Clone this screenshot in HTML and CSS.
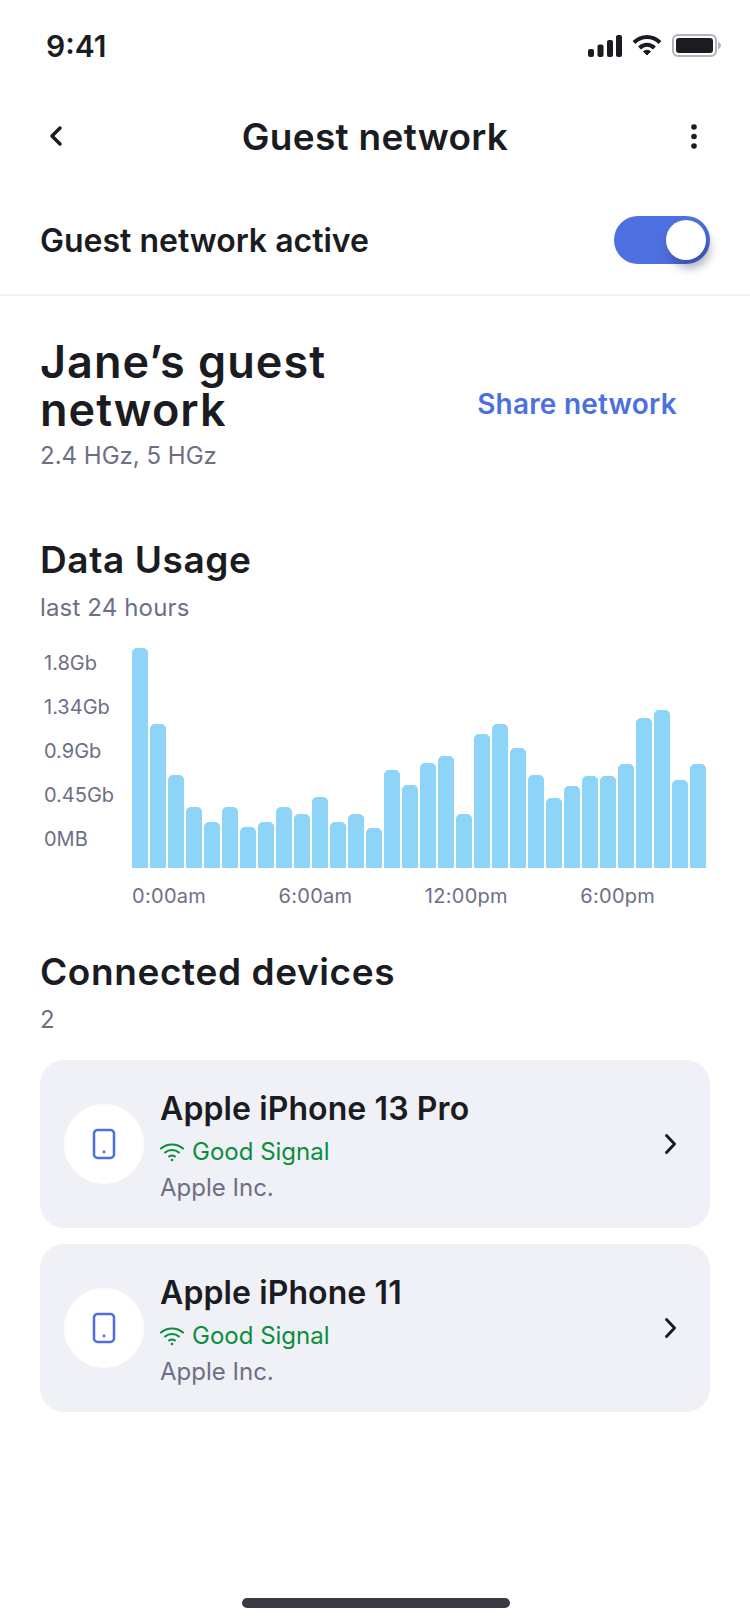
FILE: index.html
```html
<!DOCTYPE html>
<html lang="en">

<head>
    <meta charset="utf-8">
    <title>Guest network</title>
    <meta name="viewport" content="width=device-width, initial-scale=1">
    <link rel="stylesheet" href="styles.css">
</head>

<body>
    <div class="status-bar">
        <span class="status-time">9:41</span>
        <div class="status-icons">
            <svg width="34" height="22" viewBox="0 0 34 22" fill="#1b1c22">
                <rect x="0" y="14" width="6" height="8" rx="2"/>
                <rect x="9.5" y="9.5" width="6" height="12.5" rx="2"/>
                <rect x="19" y="5" width="6" height="17" rx="2"/>
                <rect x="28" y="0" width="6" height="22" rx="2"/>
            </svg>
            <svg width="30" height="23" viewBox="0 0 30 23" fill="none" stroke="#1b1c22" stroke-width="4">
                <path d="M2 8.5C9.5 1.2 20.5 1.2 28 8.500"/>
                <path d="M7.500 14C12 9.800 18 9.800 22.500 14"/>
                <path d="M11.500 17.500L15 21 18.500 17.500C16.500 15.800 13.500 15.800 11.500 17.500Z" fill="#1b1c22" stroke-width="1"/>
            </svg>
            <svg width="49" height="23" viewBox="0 0 49 23" fill="none">
                <rect x="1" y="1" width="43" height="21" rx="5" stroke="#b4b4b8" stroke-width="2"/>
                <rect x="4" y="4" width="37" height="15" rx="3" fill="#1b1c22"/>
                <path d="M46 8C48 8.500 49 10 49 11.500C49 13 48 14.500 46 15Z" fill="#b4b4b8"/>
            </svg>
        </div>
    </div>

    <header class="nav-bar">
        <div class="nav-side">
            <svg width="16" height="24" viewBox="0 0 16 24" fill="none" stroke="#1b1c22" stroke-width="3.500" stroke-linecap="round" stroke-linejoin="round">
                <path d="M12 4L4 12L12 20"/>
            </svg>
        </div>
        <h1 class="nav-title">Guest network</h1>
        <div class="nav-side nav-side-right">
            <svg width="6" height="25" viewBox="0 0 6 25" fill="#1b1c22">
                <circle cx="3" cy="3" r="2.800"/>
                <circle cx="3" cy="12.500" r="2.800"/>
                <circle cx="3" cy="22" r="2.800"/>
            </svg>
        </div>
    </header>

    <div class="active-row">
        <span class="active-label">Guest network active</span>
        <div class="toggle">
            <div class="toggle-knob"></div>
        </div>
    </div>

    <section class="network">
        <div class="network-info">
            <h2 class="network-name">Jane’s guest network</h2>
            <p class="muted">2.4 HGz, 5 HGz</p>
        </div>
        <a class="share-link">Share network</a>
    </section>

    <section class="usage">
        <h2 class="section-title">Data Usage</h2>
        <p class="muted">last 24 hours</p>

        <div class="chart">
            <div class="y-axis">
                <span>1.8Gb</span>
                <span>1.34Gb</span>
                <span>0.9Gb</span>
                <span>0.45Gb</span>
                <span>0MB</span>
            </div>
            <div class="bars">
                <div class="bar" style="height: 220px"></div>
                <div class="bar" style="height: 144px"></div>
                <div class="bar" style="height: 93px"></div>
                <div class="bar" style="height: 61px"></div>
                <div class="bar" style="height: 46px"></div>
                <div class="bar" style="height: 61px"></div>
                <div class="bar" style="height: 41px"></div>
                <div class="bar" style="height: 46px"></div>
                <div class="bar" style="height: 61px"></div>
                <div class="bar" style="height: 54px"></div>
                <div class="bar" style="height: 71px"></div>
                <div class="bar" style="height: 46px"></div>
                <div class="bar" style="height: 54px"></div>
                <div class="bar" style="height: 40px"></div>
                <div class="bar" style="height: 98px"></div>
                <div class="bar" style="height: 83px"></div>
                <div class="bar" style="height: 105px"></div>
                <div class="bar" style="height: 112px"></div>
                <div class="bar" style="height: 54px"></div>
                <div class="bar" style="height: 134px"></div>
                <div class="bar" style="height: 144px"></div>
                <div class="bar" style="height: 120px"></div>
                <div class="bar" style="height: 93px"></div>
                <div class="bar" style="height: 70px"></div>
                <div class="bar" style="height: 82px"></div>
                <div class="bar" style="height: 92px"></div>
                <div class="bar" style="height: 92px"></div>
                <div class="bar" style="height: 104px"></div>
                <div class="bar" style="height: 150px"></div>
                <div class="bar" style="height: 158px"></div>
                <div class="bar" style="height: 88px"></div>
                <div class="bar" style="height: 104px"></div>
            </div>
        </div>
        <div class="x-axis">
            <span>0:00am</span>
            <span>6:00am</span>
            <span>12:00pm</span>
            <span>6:00pm</span>
        </div>
    </section>

    <section class="devices">
        <h2 class="section-title">Connected devices</h2>
        <p class="muted">2</p>

        <div class="device-list">
            <div class="device-card">
                <div class="device-icon">
                    <svg width="24" height="32" viewBox="0 0 24 32" fill="none" stroke="#4e6fdf" stroke-width="2.500">
                        <rect x="2" y="2" width="20" height="28" rx="3.500"/>
                        <circle cx="12" cy="24" r="1.400" fill="#4e6fdf" stroke="none"/>
                    </svg>
                </div>
                <div class="device-info">
                    <div class="device-name">Apple iPhone 13 Pro</div>
                    <div class="device-signal">
                        <svg width="24" height="20" viewBox="0 0 24 20" fill="none" stroke="#0b8d3f" stroke-width="2" stroke-linecap="round">
                            <path d="M1 6.500C7 1 17 1 23 6.500"/>
                            <path d="M5 10.500C9 7.200 15 7.200 19 10.500"/>
                            <path d="M9 14.500C10.800 13.200 13.200 13.200 15 14.500"/>
                            <circle cx="12" cy="18" r="1.300" fill="#0b8d3f" stroke="none"/>
                        </svg>
                        Good Signal
                    </div>
                    <div class="device-vendor">Apple Inc.</div>
                </div>
                <svg width="16" height="24" viewBox="0 0 16 24" fill="none" stroke="#1b1c22" stroke-width="3" stroke-linecap="round" stroke-linejoin="round">
                    <path d="M4.500 3.500L12.500 12L4.500 20.500"/>
                </svg>
            </div>

            <div class="device-card">
                <div class="device-icon">
                    <svg width="24" height="32" viewBox="0 0 24 32" fill="none" stroke="#4e6fdf" stroke-width="2.500">
                        <rect x="2" y="2" width="20" height="28" rx="3.500"/>
                        <circle cx="12" cy="24" r="1.400" fill="#4e6fdf" stroke="none"/>
                    </svg>
                </div>
                <div class="device-info">
                    <div class="device-name">Apple iPhone 11</div>
                    <div class="device-signal">
                        <svg width="24" height="20" viewBox="0 0 24 20" fill="none" stroke="#0b8d3f" stroke-width="2" stroke-linecap="round">
                            <path d="M1 6.500C7 1 17 1 23 6.500"/>
                            <path d="M5 10.500C9 7.200 15 7.200 19 10.500"/>
                            <path d="M9 14.500C10.800 13.200 13.200 13.200 15 14.500"/>
                            <circle cx="12" cy="18" r="1.300" fill="#0b8d3f" stroke="none"/>
                        </svg>
                        Good Signal
                    </div>
                    <div class="device-vendor">Apple Inc.</div>
                </div>
                <svg width="16" height="24" viewBox="0 0 16 24" fill="none" stroke="#1b1c22" stroke-width="3" stroke-linecap="round" stroke-linejoin="round">
                    <path d="M4.500 3.500L12.500 12L4.500 20.500"/>
                </svg>
            </div>
        </div>
    </section>

    <div class="home-indicator"></div>
</body>

</html>
```

FILE: styles.css
```css
* {
    box-sizing: border-box;
}

html,
body {
    height: 1624px;
}

body {
    position: relative;
    margin: 0;
    overflow: hidden;
    font-family: Inter, "Liberation Sans", sans-serif;
    background-color: #fff;
    color: #1b1c22;
}

h1,
h2,
p {
    margin: 0;
}

.status-bar {
    height: 91px;
    padding: 0 29px 0 46px;
    display: flex;
    align-items: center;
    justify-content: space-between;
}

.status-time {
    font-size: 30px;
    font-weight: 600;
}

.status-icons {
    display: flex;
    align-items: center;
    gap: 10px;
}

.nav-bar {
    height: 90px;
    padding: 0 53px 0 48px;
    display: flex;
    align-items: center;
}

.nav-side {
    flex: 1;
    display: flex;
    align-items: center;
}

.nav-side-right {
    justify-content: flex-end;
}

.nav-title {
    margin-left: 5px;
    font-size: 37px;
    font-weight: 600;
    letter-spacing: 0.3px;
}

.active-row {
    height: 115px;
    padding: 4px 40px 0;
    display: flex;
    align-items: center;
    justify-content: space-between;
    border-bottom: 2px solid #f0f1f6;
}

.active-label {
    margin-top: 2px;
    font-size: 32px;
    font-weight: 600;
}

.toggle {
    width: 96px;
    height: 48px;
    padding: 4px;
    display: flex;
    justify-content: flex-end;
    background-color: #4e6fdf;
    border-radius: 24px;
}

.toggle-knob {
    width: 40px;
    height: 40px;
    background-color: #fff;
    border-radius: 50%;
    box-shadow: 4px 8px 10px rgba(20, 30, 80, 0.35);
}

.network {
    padding: 42px 73px 0 40px;
    display: flex;
    align-items: center;
    justify-content: space-between;
}

.network-name {
    width: 340px;
    font-size: 45px;
    line-height: 48px;
    font-weight: 600;
    letter-spacing: 1px;
}

.network-info .muted {
    margin-top: 4px;
}

.share-link {
    margin-bottom: 4px;
    color: #4e6fdf;
    font-size: 28px;
    font-weight: 600;
    letter-spacing: 0.2px;
}

.muted {
    color: #6c6f85;
    font-size: 24px;
    line-height: 36px;
}

.usage {
    padding: 62px 40px 0;
}

.section-title {
    font-size: 37px;
    line-height: 48px;
    font-weight: 600;
    letter-spacing: 0.6px;
}

.usage .muted {
    margin-top: 6px;
    letter-spacing: 0.15px;
}

.chart {
    margin-top: 15px;
    display: flex;
    align-items: flex-end;
}

.y-axis {
    width: 92px;
    height: 220px;
    margin-bottom: 7px;
    padding-left: 4px;
    display: flex;
    flex-direction: column;
    color: #6c6f85;
    font-size: 20px;
    line-height: 44px;
}

.bars {
    display: flex;
    align-items: flex-end;
    gap: 2px;
}

.bar {
    width: 16px;
    background-color: #8dd4f8;
    border-radius: 5px 5px 0 0;
}

.x-axis {
    margin-top: 14px;
    padding-left: 92px;
    display: flex;
    gap: 72.3px;
    color: #6c6f85;
    font-size: 20px;
    line-height: 28px;
    letter-spacing: 0.3px;
}

.devices {
    padding: 38px 40px 0;
}

.devices .muted {
    margin-top: 6px;
}

.device-list {
    margin-top: 22px;
    display: flex;
    flex-direction: column;
    gap: 16px;
}

.device-card {
    height: 168px;
    padding: 0 32px 0 24px;
    display: flex;
    align-items: center;
    background-color: #f0f1f6;
    border-radius: 24px;
}

.device-icon {
    width: 80px;
    height: 80px;
    margin-right: 16px;
    display: flex;
    align-items: center;
    justify-content: center;
    background-color: #fff;
    border-radius: 50%;
}

.device-info {
    flex: 1;
    padding-top: 5px;
}

.device-name {
    font-size: 32px;
    line-height: 44px;
    font-weight: 600;
    letter-spacing: 0.1px;
}

.device-signal {
    margin-top: 3px;
    display: flex;
    align-items: center;
    gap: 8px;
    color: #0b8d3f;
    font-size: 24px;
    line-height: 36px;
}

.device-vendor {
    color: #6c6f85;
    font-size: 24px;
    line-height: 36px;
}

.home-indicator {
    position: absolute;
    left: 242px;
    bottom: 16px;
    width: 268px;
    height: 10px;
    background-color: #393a45;
    border-radius: 5px;
}
```
